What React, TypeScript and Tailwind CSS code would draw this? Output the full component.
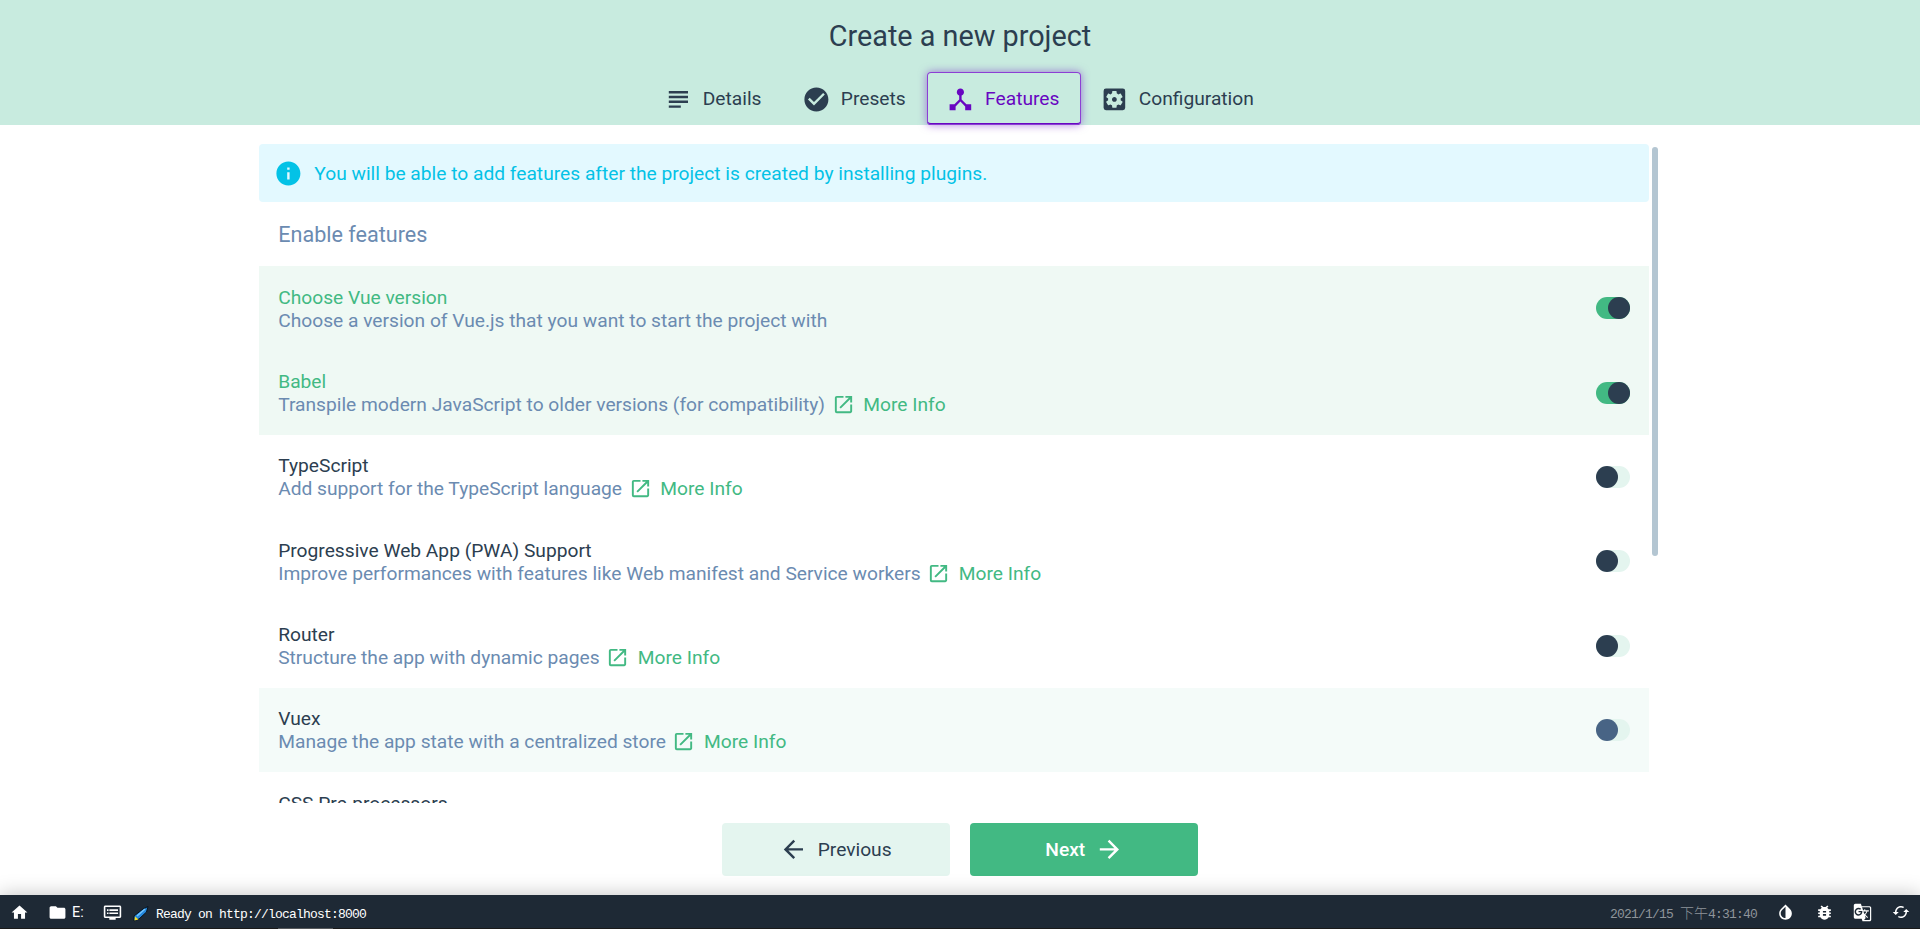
import React from 'react';
import clsx from 'clsx';
import {
  MdArrowBack,
  MdArrowForward,
  MdBugReport,
  MdCached,
  MdCheckCircle,
  MdDeviceHub,
  MdDvr,
  MdFolder,
  MdGTranslate,
  MdHome,
  MdInfo,
  MdInvertColors,
  MdOpenInNew,
  MdSettingsApplications,
  MdSubject,
} from 'react-icons/md';

interface Feature {
  name: string;
  description?: string;
  link?: boolean;
  enabled?: boolean;
  hovered?: boolean;
}

const features: Feature[] = [
  { name: 'Choose Vue version', description: 'Choose a version of Vue.js that you want to start the project with', enabled: true },
  { name: 'Babel', description: 'Transpile modern JavaScript to older versions (for compatibility)', link: true, enabled: true },
  { name: 'TypeScript', description: 'Add support for the TypeScript language', link: true },
  { name: 'Progressive Web App (PWA) Support', description: 'Improve performances with features like Web manifest and Service workers', link: true },
  { name: 'Router', description: 'Structure the app with dynamic pages', link: true },
  { name: 'Vuex', description: 'Manage the app state with a centralized store', link: true, hovered: true },
  { name: 'CSS Pre-processors' },
];

const tabs = [
  { label: 'Details', icon: MdSubject },
  { label: 'Presets', icon: MdCheckCircle },
  { label: 'Features', icon: MdDeviceHub, active: true },
  { label: 'Configuration', icon: MdSettingsApplications },
];

const Header: React.FC = () => (
  <header className="flex h-[125px] shrink-0 flex-col items-center bg-[#c8ebdf]">
    <h1 className="flex h-[72px] items-center text-[28.8px] leading-none">Create a new project</h1>
    <nav className="flex h-[53px]">
      {tabs.map(({ label, icon: Icon, active }) => (
        <button
          key={label}
          className={clsx(
            'flex items-center gap-[10px] rounded-[4px] pt-px pr-[21.4px] pl-[19.2px]',
            active && 'z-10 text-[#6806c1] shadow-[inset_0_0_0_1px_#8c3fd4,inset_0_-2px_0_0_#6806c1,0_0_9px_#6806c180]'
          )}
        >
          <Icon className="size-[28.8px]" />
          {label}
        </button>
      ))}
    </nav>
  </header>
);

const Toggle: React.FC<{ on?: boolean; hovered?: boolean }> = ({ on, hovered }) => (
  <span className={clsx('flex h-[22px] w-[34px] shrink-0 rounded-full', on ? 'justify-end bg-[#42b983]' : 'bg-[#e4f5ef]')}>
    <span className={clsx('size-[22px] rounded-full', hovered ? 'bg-[#486485]' : 'bg-[#2c3e50]')} />
  </span>
);

const FeatureRow: React.FC<{ feature: Feature }> = ({ feature }) => (
  <li
    className={clsx(
      'flex h-[84.35px] shrink-0 items-center justify-between px-[19.2px]',
      feature.enabled && 'bg-[#eff9f4]',
      feature.hovered && 'bg-[#f4fbf9]'
    )}
  >
    <div className="pt-[0.7px] leading-[23px]">
      <div className={clsx(feature.enabled && 'text-[#42b983]')}>{feature.name}</div>
      <div className="flex h-[23px] text-[#6b8bb1]">
        {feature.description}
        {feature.link && (
          <a className="ml-[6.5px] flex items-center gap-[8.7px] text-[#42b983]">
            <MdOpenInNew className="size-[23px]" />
            More Info
          </a>
        )}
      </div>
    </div>
    <Toggle on={feature.enabled} hovered={feature.hovered} />
  </li>
);

const StatusBar: React.FC = () => (
  <footer className="flex h-[34px] shrink-0 flex-col bg-[#1e2935] font-['Liberation_Mono','Noto_Sans_CJK_SC',monospace] text-[13px] tracking-[-0.8px] text-white shadow-[0_0_20px_rgba(0,0,0,0.25)]">
    <div className="flex flex-1 items-center justify-between px-[10px] pt-0.5">
      <div className="flex items-center">
        <MdHome className="size-[19px]" />
        <MdFolder className="ml-[19px] size-[19px]" />
        <span className="ml-[5px] w-[15px] font-['Roboto',sans-serif] text-[14.4px] tracking-normal">E:</span>
        <MdDvr className="ml-4 size-[19px]" />
        <svg viewBox="0 0 16 16" className="mt-0.5 ml-[11px] size-4">
          <path d="M1 15 1 10 10 3 15 .5 13.5 6 6 13Z" fill="#2487dc" stroke="#07131f" />
          <path d="m4 10 8-7" stroke="#73c5ff" strokeWidth="1.5" />
          <path d="m1.5 14.5.5-4 3.500 3Z" fill="#f7df28" />
        </svg>
        <span className="mt-1 ml-[7px]">Ready on http://localhost:8000</span>
      </div>
      <div className="flex items-center">
        <span className="mt-1 mr-[19px] text-[#8e949a]">
          2021/1/15 <span className="text-sm font-light tracking-normal">下午</span>4:31:40
        </span>
        <div className="flex gap-[19.7px]">
          <MdInvertColors className="size-[19px]" />
          <MdBugReport className="size-[19px]" />
          <MdGTranslate className="size-[19px]" />
          <MdCached className="size-[18px]" />
        </div>
      </div>
    </div>
    <div className="flex h-px bg-[#1a1a1a]">
      <div className="ml-[278px] w-[55px] bg-[#55585b]" />
    </div>
  </footer>
);

const App: React.FC = () => {
  return (
    <div className="flex h-screen flex-col overflow-hidden bg-white font-['Roboto',sans-serif] text-[19.2px] text-[#2c3e50]">
      <Header />
      <main className="flex min-h-0 flex-1 flex-col items-center pt-[19px]">
        <div className="flex h-[659px] w-[1402px] gap-[3px]">
          <div className="flex w-[1390px] flex-col overflow-hidden">
            <div className="flex h-[58px] shrink-0 items-center gap-3 rounded-[4px] bg-[#e3f9ff] px-[14.5px] text-[#03c2e6]">
              <MdInfo className="size-[28.8px]" />
              <span className="pt-0.5">You will be able to add features after the project is created by installing plugins.</span>
            </div>
            <h2 className="flex h-16 shrink-0 items-center px-[19.2px] pt-0.5 text-[21.6px] text-[#6b8bb1]">Enable features</h2>
            <ul className="flex flex-col">
              {features.map((feature) => (
                <FeatureRow key={feature.name} feature={feature} />
              ))}
            </ul>
          </div>
          <div className="mt-[3px] h-[409px] w-1.5 rounded-full bg-[#b4c6d2]" />
        </div>
        <div className="mt-5 flex gap-5">
          <button className="flex h-[53px] w-[228px] items-center justify-center gap-[9.5px] rounded-[4px] bg-[#e4f5ef] pr-px">
            <MdArrowBack className="size-[28.8px]" />
            <span className="pt-px">Previous</span>
          </button>
          <button className="flex h-[53px] w-[228px] items-center justify-center gap-[9.6px] rounded-[4px] bg-[#42b983] pl-px font-medium text-white">
            <span className="pt-px">Next</span>
            <MdArrowForward className="size-[28.8px]" />
          </button>
        </div>
      </main>
      <StatusBar />
    </div>
  );
};

export default App;
